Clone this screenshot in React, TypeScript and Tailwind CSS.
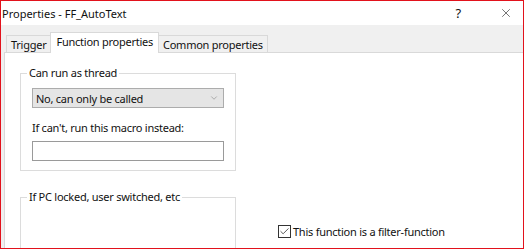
import { Check, ChevronDown, X } from 'lucide-react';

const font = { fontFamily: '"Noto Sans", "Liberation Sans", sans-serif' };

function Tab({ label, active }: { label: string; active?: boolean }) {
  if (active) {
    return (
      <div className="relative z-10 -mb-px -ml-px flex h-[21px] items-start border border-b-0 border-[#d9d9d9] bg-white px-[5px] pt-[1px]">
        {label}
      </div>
    );
  }
  return (
    <div className="-ml-px flex h-[17px] items-center border border-b-0 border-[#d9d9d9] bg-[#f0f0f0] px-[4px] first:ml-0">
      {label}
    </div>
  );
}

function GroupBox({ title, className, children }: { title: string; className?: string; children?: React.ReactNode }) {
  return (
    <div className={`relative ml-[15px] w-[216px] border border-[#dcdcdc] ${className ?? ''}`}>
      <span className="absolute -top-[9px] left-[6px] bg-white px-[2px] leading-[16px]">{title}</span>
      {children}
    </div>
  );
}

export default function App() {
  return (
    <div
      className="flex h-[249px] w-[524px] flex-col overflow-hidden border border-[#e2121c] bg-[#f0f0f0] text-[11px] leading-[15px] tracking-[-0.25px] text-[#111]"
      style={font}
    >
      {/* title bar */}
      <div className="flex h-[24px] shrink-0 items-center bg-white pl-[1px]">
        <span className="flex-1 text-[11px] tracking-normal">Properties - FF_AutoText</span>
        <span className="mr-[38px] text-[13px]">?</span>
        <X className="mr-[10px] h-[14px] w-[14px]" strokeWidth={1} />
      </div>

      {/* tab strip */}
      <div className="flex h-[27px] shrink-0 items-end pl-[5px]">
        <Tab label="Trigger" />
        <Tab label="Function properties" active />
        <Tab label="Common properties" />
      </div>

      {/* tab page */}
      <div className="ml-[3px] flex flex-1 flex-col border-l border-t border-[#d9d9d9] bg-white">
        <GroupBox title="Can run as thread" className="mt-[20px] h-[98px] shrink-0">
          <div className="flex flex-col pl-[11px] pt-[14px]">
            <div className="flex h-[20px] w-[192px] items-center justify-between border border-[#acacac] bg-[#e5e5e5] pl-[3px] pr-[4px]">
              <span>No, can only be called</span>
              <ChevronDown className="h-[10px] w-[10px] text-[#707070]" strokeWidth={1.2} />
            </div>
            <div className="mt-[12px]">If can't, run this macro instead:</div>
            <div className="mt-[6px] h-[20px] w-[192px] border border-[#9a9a9a] bg-white" />
          </div>
        </GroupBox>

        <div className="mt-[26px] flex flex-1 items-start">
          <GroupBox title="If PC locked, user switched, etc" className="h-[60px] shrink-0" />
          <label className="ml-[42px] mt-[27px] flex items-center">
            <span className="mr-[2px] flex h-[13px] w-[13px] items-center justify-center border border-[#333333] bg-white">
              <Check className="h-[11px] w-[11px]" strokeWidth={1.5} />
            </span>
            This function is a filter-function
          </label>
        </div>
      </div>
    </div>
  );
}
